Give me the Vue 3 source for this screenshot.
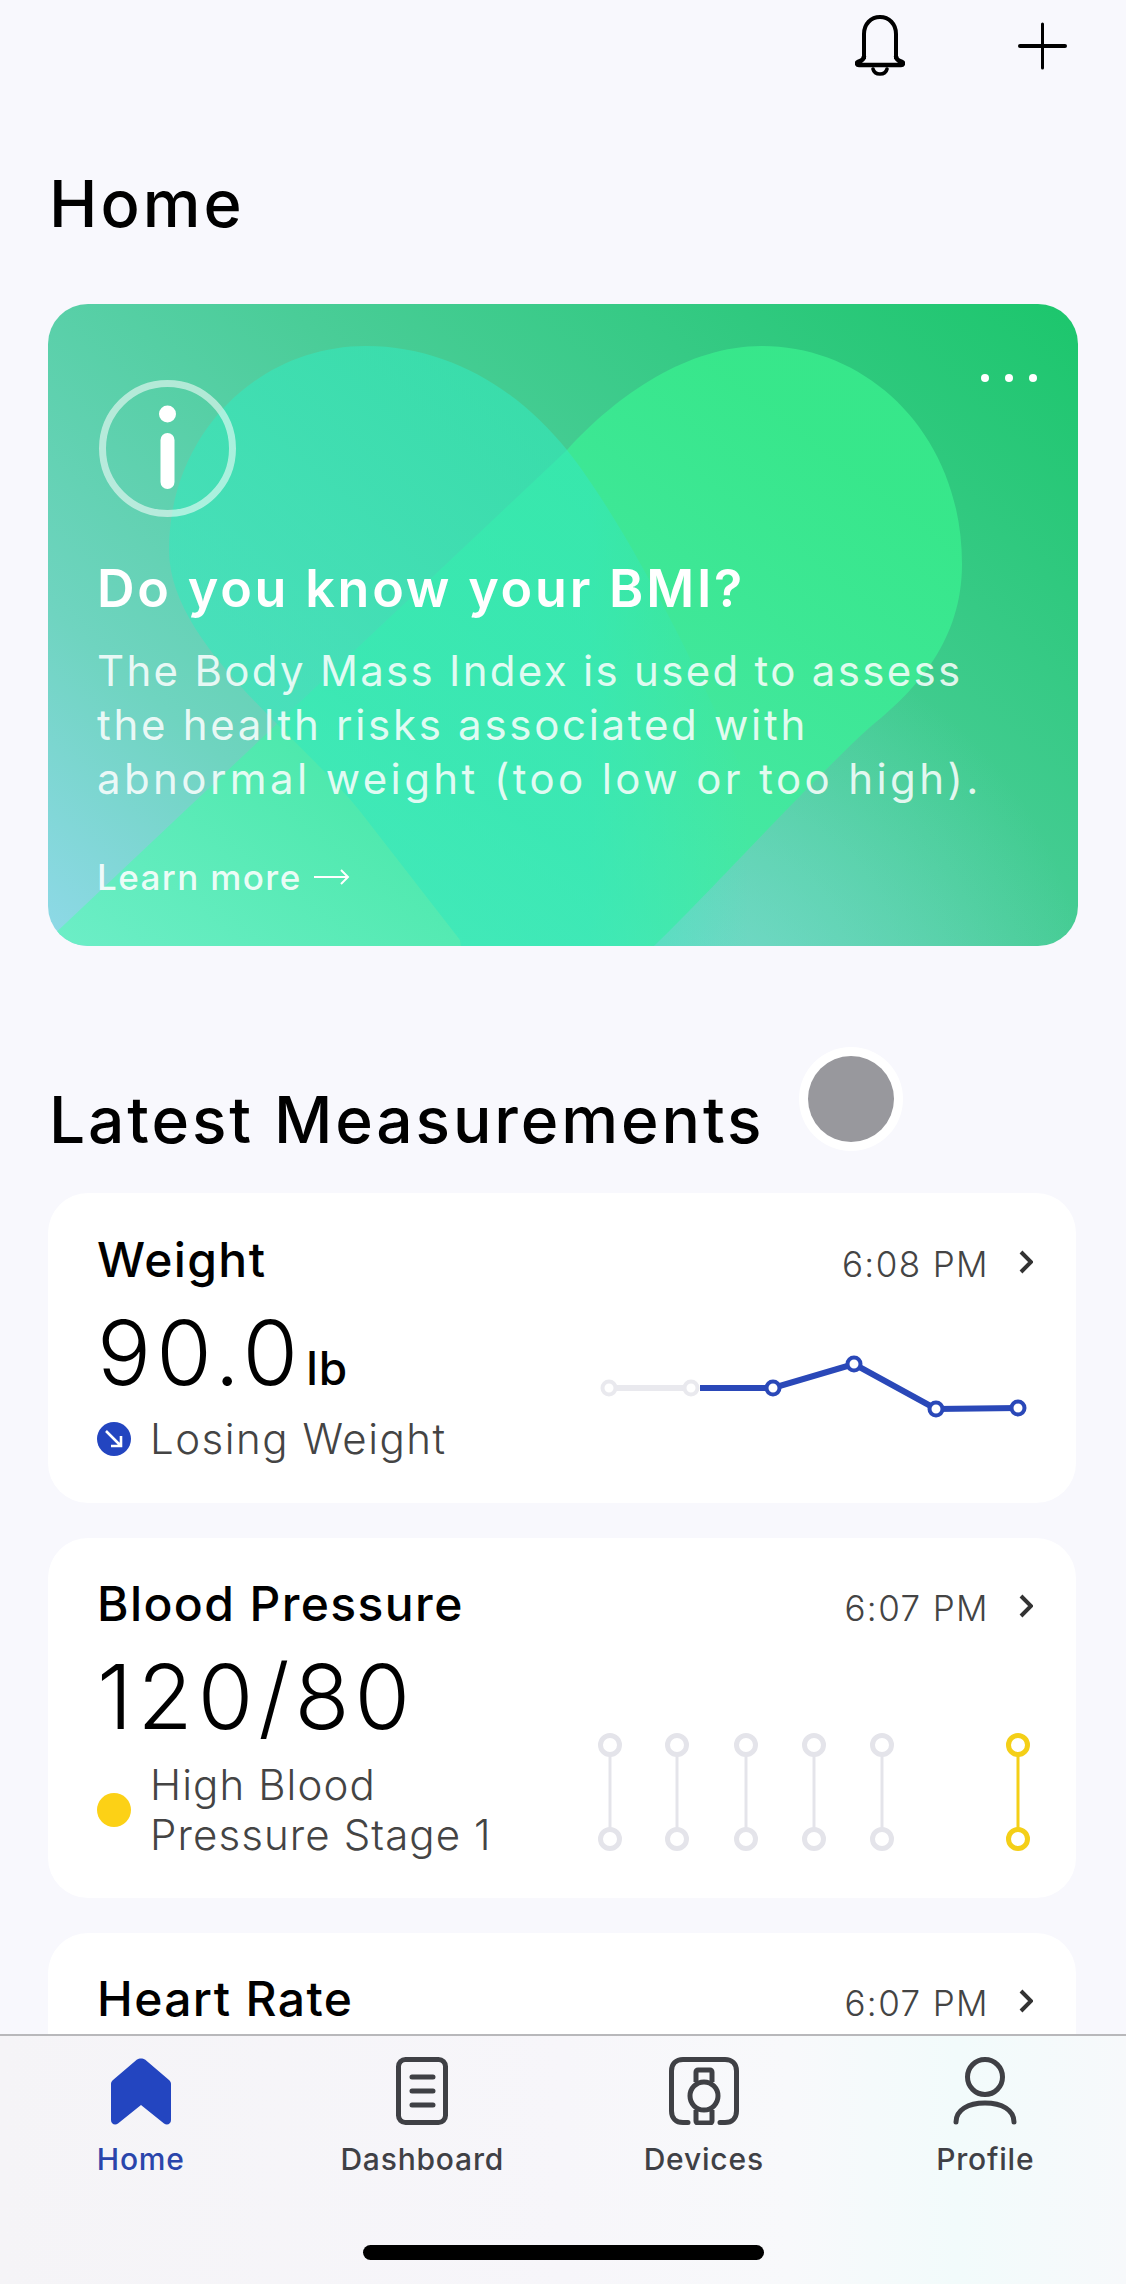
<template>
  <div class="screen">
    <header class="topbar">
      <svg class="bell" viewBox="0 0 50 61" width="50" height="61" fill="none" stroke="#000">
        <path d="M9 44V19C9 9 16 2 25 2s16 7 16 17v25" stroke-width="4" />
        <path d="M9 41c0 3-3 5-6 6-2 1-1 3 1 3h42c2 0 3-2 1-3-3-1-6-3-6-6" stroke-width="4.500" />
        <path d="M18 54c1 4 4 5 7 5s6-1 7-5" stroke-width="3.6" stroke-linecap="round" />
      </svg>
      <svg class="plus" viewBox="0 0 49 48" width="49" height="48" stroke="#000" stroke-linecap="round">
        <path d="M2 24h45" stroke-width="4" />
        <path d="M24.5 2v44" stroke-width="3" />
      </svg>
    </header>

    <h1 class="page-title">Home</h1>

    <section class="banner">
      <svg class="banner-bg" viewBox="0 0 1030 642" width="1030" height="642">
        <defs>
          <linearGradient id="rightLeaf" x1="0.85" y1="0.1" x2="0.1" y2="0.9">
            <stop offset="0" stop-color="#38ea8c" />
            <stop offset="0.5" stop-color="#44eaa6" />
            <stop offset="1" stop-color="#74f2cc" />
          </linearGradient>
          <linearGradient id="leftLeaf" gradientUnits="userSpaceOnUse" x1="540" y1="0" x2="700" y2="0">
            <stop offset="0" stop-color="#34e8bc" stop-opacity="0.6" />
            <stop offset="1" stop-color="#34e8bc" stop-opacity="0" />
          </linearGradient>
        </defs>
        <path d="M714 42C820 42 914 130 914 260C914 335 870 385 821 424C760 480 660 590 606 642L400 850L-110 740L519 146C570 90 640 42 714 42Z" fill="url(#rightLeaf)" fill-opacity="0.9" />
        <path d="M318 42C400 42 470 85 519 146C570 210 640 340 700 480L760 700H420L412 636L311 506C250 430 121 340 121 246C121 130 210 42 318 42Z" fill="url(#leftLeaf)" />
      </svg>
      <div class="banner-more"><i></i><i></i><i></i></div>
      <svg class="info" viewBox="0 0 137 137" width="137" height="137">
        <circle cx="68.5" cy="68.5" r="65" fill="none" stroke="#fff" stroke-opacity="0.55" stroke-width="7" />
        <circle cx="68.5" cy="34" r="8.500" fill="#fff" />
        <rect x="61.5" y="53" width="14" height="56" rx="7" fill="#fff" />
      </svg>
      <h2 class="banner-title">Do you know your BMI?</h2>
      <p class="banner-text">
        <span>The Body Mass Index is used to assess</span>
        <span class="line-two">the health risks associated with</span>
        <span class="line-three">abnormal weight (too low or too high).</span>
      </p>
      <div class="banner-link">
        Learn more
        <svg viewBox="0 0 36 18" width="36" height="18" fill="none" stroke="#fff" stroke-width="2">
          <path d="M0 9h34M27 2l7 7-7 7" />
        </svg>
      </div>
    </section>

    <section class="latest">
      <h2 class="section-title">Latest Measurements</h2>
      <div class="touch-dot"></div>
    </section>

    <article class="card">
      <div class="card-head">
        <span class="card-name">Weight</span>
        <span class="card-time">6:08 PM</span>
        <svg class="chevron" viewBox="0 0 14 24" width="14" height="24"><path d="M2 2l10 10L2 22" /></svg>
      </div>
      <div class="card-body">
        <div>
          <div class="value">90.0<small>lb</small></div>
          <div class="status">
            <svg class="status-dot" viewBox="0 0 34 34" width="34" height="34">
              <circle cx="17" cy="17" r="17" fill="#2345c0" />
              <path d="M9 9l15 15M24 14v10H14" fill="none" stroke="#fff" stroke-width="2.6" />
            </svg>
            <span>Losing Weight</span>
          </div>
        </div>
        <svg class="chart chart-line" viewBox="0 0 430 70" width="430" height="70" fill="none">
          <path d="M6 38H88" stroke="#e9e9ee" stroke-width="6" />
          <path d="M97 38H170L251 14L333 59L415 58" stroke="#2a48b8" stroke-width="6" />
          <circle v-for="(p, i) in weightPoints" :key="i" :cx="p[0]" :cy="p[1]" r="6.5" fill="#fff" :stroke="i < 2 ? '#e9e9ee' : '#2a48b8'" stroke-width="4" />
        </svg>
      </div>
    </article>

    <article class="card card-bp">
      <div class="card-head">
        <span class="card-name">Blood Pressure</span>
        <span class="card-time">6:07 PM</span>
        <svg class="chevron" viewBox="0 0 14 24" width="14" height="24"><path d="M2 2l10 10L2 22" /></svg>
      </div>
      <div class="card-body">
        <div>
          <div class="value">120/80</div>
          <div class="status status-bp">
            <span class="yellow-dot"></span>
            <span>High Blood<br />Pressure Stage 1</span>
          </div>
        </div>
        <svg class="chart chart-bars" viewBox="0 0 430 122" width="430" height="122" fill="none">
          <g v-for="x in barXs" :key="x" :stroke="x === 415 ? '#f4cf17' : '#e4e4ea'">
            <path :d="`M${x} 14V108`" stroke-width="3" />
            <circle :cx="x" cy="14" r="9.5" fill="#fff" stroke-width="5" />
            <circle :cx="x" cy="108" r="9.5" fill="#fff" stroke-width="5" />
          </g>
        </svg>
      </div>
    </article>

    <article class="card card-last">
      <div class="card-head">
        <span class="card-name">Heart Rate</span>
        <span class="card-time">6:07 PM</span>
        <svg class="chevron" viewBox="0 0 14 24" width="14" height="24"><path d="M2 2l10 10L2 22" /></svg>
      </div>
    </article>

    <nav class="tabbar">
      <div class="tab active">
        <svg viewBox="0 0 62 68" width="62" height="68">
          <path d="M27 2.500C29 1 33 1 35 2.500L59 23C60.500 24.500 61 25.500 61 27V63C61 67 57 69 54 66.500L31 48L8 66.500C5 69 1 67 1 63V27C1 25.500 1.500 24.500 3 23Z" fill="#2345c0" />
        </svg>
        <span>Home</span>
      </div>
      <div class="tab">
        <svg viewBox="0 0 52 68" width="52" height="68" fill="none" stroke="#3f4045" stroke-width="5">
          <rect x="2.5" y="2.5" width="47" height="63" rx="7" />
          <path d="M16 20h21M16 34h21M16 48h21" stroke-linecap="round" />
        </svg>
        <span>Dashboard</span>
      </div>
      <div class="tab">
        <svg viewBox="0 0 70 68" width="70" height="68" fill="none" stroke="#3f4045" stroke-width="5">
          <path d="M19 65.5H14C7 65.5 2.5 61 2.5 54V14C2.5 7 7 2.500 14 2.500H56C63 2.500 67.500 7 67.500 14V54C67.500 61 63 65.500 56 65.500H51" stroke-linecap="round" />
          <circle cx="35" cy="39" r="14" />
          <path d="M27 25V15a2 2 0 0 1 2-2H41a2 2 0 0 1 2 2V25M27 53V64a2 2 0 0 0 2 2H41a2 2 0 0 0 2-2V53" />
        </svg>
        <span>Devices</span>
      </div>
      <div class="tab">
        <svg viewBox="0 0 64 68" width="64" height="68" fill="none" stroke="#3f4045" stroke-width="5">
          <circle cx="32" cy="20" r="17.500" />
          <path d="M3 65C3 53 15 46 32 46S61 53 61 65" stroke-linecap="round" />
        </svg>
        <span>Profile</span>
      </div>
      <div class="home-indicator"></div>
    </nav>
  </div>
</template>

<script setup>
const weightPoints = [[6, 38], [88, 38], [170, 38], [251, 14], [333, 59], [415, 58]]
const barXs = [7, 74, 143, 211, 279, 415]
</script>

<style>
html, body {
  margin: 0;
  background: #f8f8fd;
}
</style>

<style scoped>
.screen {
  position: relative;
  width: 1126px;
  height: 2284px;
  overflow: hidden;
  background: #f8f8fd;
  font-family: Inter, "Liberation Sans", sans-serif;
  color: #000;
}

.topbar {
  display: flex;
  justify-content: flex-end;
  align-items: center;
  gap: 113px;
  height: 91px;
  padding-right: 59px;
}

.page-title {
  margin: 75px 0 62px 49px;
  font-size: 65px;
  line-height: 76px;
  font-weight: 500;
  letter-spacing: 3px;
}

.banner {
  position: relative;
  box-sizing: border-box;
  width: 1030px;
  height: 642px;
  margin-left: 48px;
  padding: 76px 40px 0 49px;
  border-radius: 40px;
  overflow: hidden;
  color: #fff;
  background:
    radial-gradient(circle at 62% 112%, rgba(125, 222, 214, 0.7), rgba(125, 222, 214, 0) 42%),
    linear-gradient(221deg, #1cc66c 0%, #4acd98 45%, #6fd4c0 78%, #8fd9e8 100%);
}

.banner-bg {
  position: absolute;
  left: 0;
  top: 0;
}

.banner-more {
  position: absolute;
  top: 70px;
  right: 41px;
  display: flex;
  gap: 16px;
}

.banner-more i {
  width: 8px;
  height: 8px;
  border-radius: 50%;
  background: #fff;
}

.info {
  position: relative;
  display: block;
  margin-left: 2px;
}

.banner-title {
  position: relative;
  margin: 42px 0 0;
  font-size: 52px;
  line-height: 60px;
  font-weight: 600;
  letter-spacing: 2.8px;
}

.banner-text {
  position: relative;
  margin: 25px 0 0;
  font-size: 42px;
  line-height: 54px;
  font-weight: 400;
  letter-spacing: 2.3px;
  color: rgba(255, 255, 255, 0.85);
  white-space: nowrap;
}

.banner-text span {
  display: block;
}

.banner-text .line-two {
  letter-spacing: 2.7px;
}

.banner-text .line-three {
  letter-spacing: 3.4px;
}

.banner-link {
  position: relative;
  display: flex;
  align-items: center;
  gap: 12px;
  margin-top: 50px;
  font-size: 35px;
  line-height: 42px;
  font-weight: 500;
  letter-spacing: 1.400px;
  color: rgba(255, 255, 255, 0.9);
}

.latest {
  position: relative;
  height: 247px;
}

.section-title {
  position: absolute;
  left: 49px;
  top: 136px;
  margin: 0;
  font-size: 64px;
  line-height: 76px;
  font-weight: 500;
  letter-spacing: 2.9px;
}

.touch-dot {
  position: absolute;
  left: 808px;
  top: 110px;
  width: 86px;
  height: 86px;
  border-radius: 50%;
  background: #98989d;
  box-shadow: 0 0 0 9px #fff;
}

.card {
  box-sizing: border-box;
  width: 1028px;
  height: 310px;
  margin: 0 0 35px 48px;
  padding: 39px 43px 39px 49px;
  border-radius: 40px;
  background: #fff;
}

.card-bp {
  height: 360px;
  padding-top: 38px;
}

.card-last {
  height: 360px;
  padding-top: 38px;
}

.card-head {
  display: flex;
  align-items: baseline;
  height: 56px;
}

.card-name {
  flex: 1;
  font-size: 48px;
  line-height: 56px;
  font-weight: 500;
  letter-spacing: 1.4px;
}

.card-time {
  font-size: 35px;
  font-weight: 300;
  letter-spacing: 1.4px;
  color: #444;
}

.chevron {
  align-self: center;
  margin: 3px 0 0 30px;
  fill: none;
  stroke: #333;
  stroke-width: 4;
}

.card-body {
  display: flex;
  justify-content: space-between;
  align-items: flex-end;
}

.value {
  margin-top: 20px;
  font-size: 90px;
  line-height: 90px;
  font-weight: 300;
  letter-spacing: 5px;
}

.value small {
  margin-left: 3px;
  font-size: 46px;
  line-height: 1;
  font-weight: 500;
  letter-spacing: 1px;
}

.status {
  display: flex;
  align-items: center;
  gap: 19px;
  margin-top: 16px;
  font-size: 42px;
  line-height: 50px;
  font-weight: 300;
  letter-spacing: 1.5px;
  color: #444;
}

.status-bp {
  margin-top: 18px;
  letter-spacing: 1.1px;
  white-space: nowrap;
}

.status-dot {
  flex: none;
}

.yellow-dot {
  flex: none;
  width: 34px;
  height: 34px;
  border-radius: 50%;
  background: #fcd116;
}

.chart {
  overflow: visible;
}

.chart-line {
  margin-bottom: 44px;
}

.chart-bars {
  margin-bottom: 7px;
}

.tabbar {
  position: absolute;
  left: 0;
  bottom: 0;
  box-sizing: border-box;
  display: grid;
  grid-template-columns: repeat(4, 1fr);
  width: 1126px;
  height: 250px;
  padding-top: 21px;
  border-top: 2px solid #b8b8bb;
  background: linear-gradient(90deg, #f5f4f7 0%, #f7f6fa 50%, #f8f9fb 70%, #f2fbfb 85%, #f7f9fb 100%);
}

.tab {
  display: flex;
  flex-direction: column;
  align-items: center;
  font-size: 30px;
  line-height: 34px;
  font-weight: 500;
  letter-spacing: 0.8px;
  color: #3f4045;
}

.tab span {
  margin-top: 17px;
}

.tab.active {
  color: #2a45ab;
}

.home-indicator {
  position: absolute;
  left: 363px;
  bottom: 24px;
  width: 401px;
  height: 15px;
  border-radius: 8px;
  background: #000;
}
</style>
